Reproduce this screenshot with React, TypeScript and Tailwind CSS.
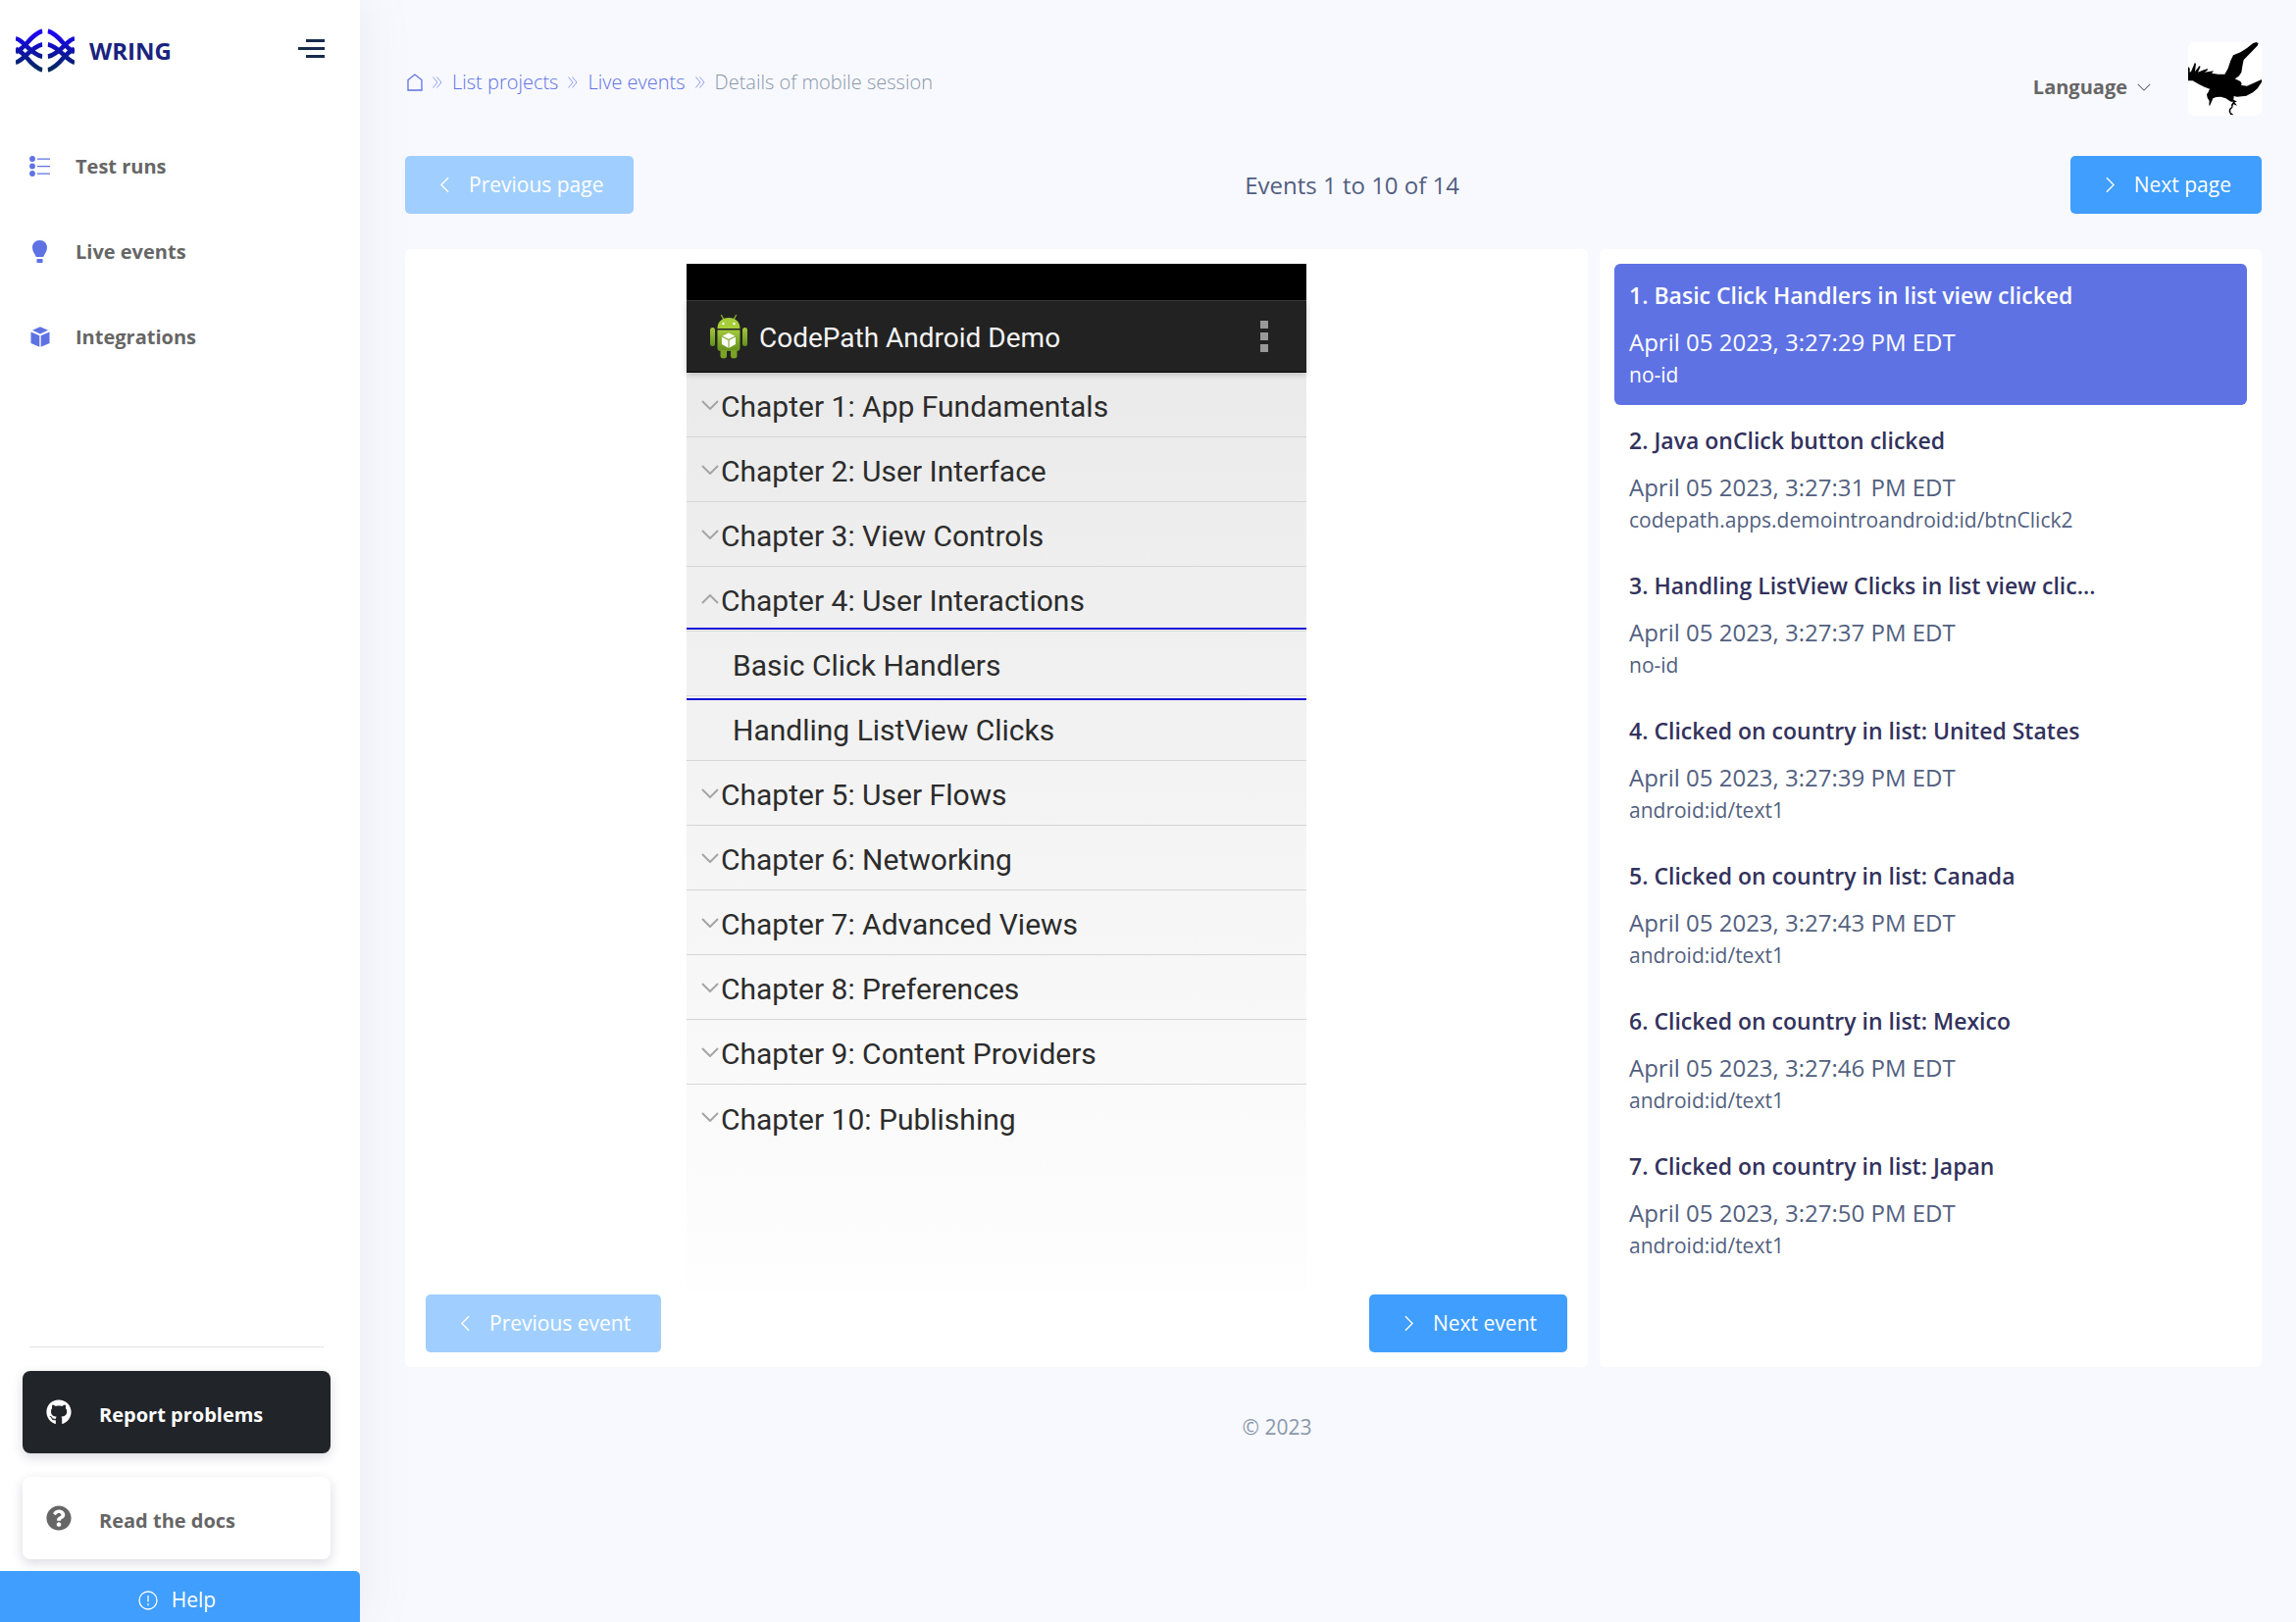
import React from "react";
import { FaGithub, FaQuestionCircle } from "react-icons/fa";

type Dir = "left" | "right" | "down" | "up";

function Chevron({ dir, className, width = 1 }: { dir: Dir; className: string; width?: number }) {
  const d = {
    left: "M9 1 L1 9 L9 17",
    right: "M1 1 L9 9 L1 17",
    down: "M1 1 L9 9 L17 1",
    up: "M1 9 L9 1 L17 9",
  }[dir];
  const vertical = dir === "left" || dir === "right";
  return (
    <svg viewBox={vertical ? "0 0 10 18" : "0 0 18 10"} className={className} fill="none" stroke="currentColor" strokeWidth={width} aria-hidden="true">
      <path d={d} />
    </svg>
  );
}

function Logo() {
  const half = "M82 7C60 15 46 30 34 45C24 57 12 66 0 72M0 30C26 36 42 76 82 86M82 48C42 58 26 98 0 104M82 127C60 119 46 104 34 89C24 77 12 68 0 62";
  return (
    <svg viewBox="0 0 180 134" className="h-[45px] w-[60px]" fill="none" stroke="url(#logoFade)" strokeWidth="14" aria-hidden="true">
      <defs>
        <linearGradient id="logoFade" gradientUnits="userSpaceOnUse" x1="0" y1="0" x2="0" y2="134">
          <stop offset="0" stopColor="#2200ff" />
          <stop offset="0.45" stopColor="#1010b8" />
          <stop offset="1" stopColor="#002b50" />
        </linearGradient>
        <clipPath id="logoHalf">
          <rect width="82" height="134" />
        </clipPath>
      </defs>
      <g clipPath="url(#logoHalf)">
        <path d={half} />
      </g>
      <g transform="translate(180 0) scale(-1 1)">
        <g clipPath="url(#logoHalf)">
          <path d={half} />
        </g>
      </g>
    </svg>
  );
}

function ListIcon() {
  return (
    <svg viewBox="0 0 21 21" className="size-[21px]" fill="currentColor" aria-hidden="true">
      <circle cx="3" cy="3" r="2.9" />
      <circle cx="3" cy="10.5" r="2.9" />
      <circle cx="3" cy="18" r="2.9" />
      <path d="M8 2.4h13v1.3H8zM8 9.9h13v1.3H8zM8 17.4h13v1.3H8z" />
    </svg>
  );
}

function BulbIcon() {
  return (
    <svg viewBox="0 0 15 23" className="h-[23px] w-[15px]" fill="currentColor" aria-hidden="true">
      <path d="M7.5 0C11.8 0 15 3.2 15 7.3c0 3.1-1.3 5-2.6 7.2-.6 1-.6 2.5-1.9 2.5h-6c-1.300 0-1.300-1.500-1.900-2.500C1.300 12.300 0 10.400 0 7.300 0 3.200 3.200 0 7.500 0z" />
      <path d="M4.500 19h6v4h-6z" />
    </svg>
  );
}

function BoxIcon() {
  return (
    <svg viewBox="0 0 20 21" className="h-[21px] w-5" fill="currentColor" aria-hidden="true">
      <path d="M10 .3 18 3.800 10 7.400 2 3.800z" />
      <path d="M.5 5.500 9.300 9.300V20.700L.5 17z" />
      <path d="M19.500 5.500 10.700 9.300V20.700L19.500 17z" />
    </svg>
  );
}

function Bird() {
  return (
    <svg viewBox="0 0 225 225" className="size-full" fill="#000" aria-hidden="true">
      <path d="M0 75 5 80 5 92 9 90 20 64 24 65 21 90 34 73 38 74 30 92 44 86 60 81 59 86 50 92 78 88 72 95 92 98 112 98 122 80 130 56 138 40 160 31 180 18 198 4 208 0 215 2 213 10 190 34 170 54 167 68 163 92 155 104 143 112 160 120 164 127 162 132 180 134 205 123 225 114 225 122 212 142 198 154 178 164 150 167 140 165 139 176 150 182 142 184 150 194 138 190 136 200 130 206 130 215 137 220 137 223 129 221 125 212 126 204 133 198 132 191 138 182 131 182 115 172 100 167 86 168 76 172 71 184 66 195 64 192 65 180 59 170 57 160 62 152 66 143 50 137 32 128 14 118 0 118z" />
    </svg>
  );
}

function Android() {
  return (
    <svg viewBox="0 0 38 46" className="h-[46px] w-[38px]" aria-hidden="true">
      <defs>
        <linearGradient id="droid" x1="0" y1="0" x2="0" y2="1">
          <stop offset="0" stopColor="#a3c93a" />
          <stop offset="1" stopColor="#64901c" />
        </linearGradient>
      </defs>
      <path d="M11.500 1.500 14 6M26.500 1.500 24 6" stroke="#8db32c" strokeWidth="1.300" strokeLinecap="round" />
      <path d="M7.500 15C7.500 8 12 4 19 4s11.500 4 11.500 11z" fill="#a6cd3a" />
      <circle cx="13.500" cy="10" r="1.200" fill="#fff" />
      <circle cx="24.500" cy="10" r="1.200" fill="#fff" />
      <path d="M7.500 16.500h23V35q0 3-3 3h-17q-3 0-3-3z" fill="url(#droid)" />
      <rect x="0" y="14" width="5" height="19" rx="2.500" fill="url(#droid)" />
      <rect x="33" y="14" width="5" height="19" rx="2.500" fill="url(#droid)" />
      <path d="M10.500 37h6.500v6q0 2.500-3.200 2.500t-3.300-2.500zM21 37h6.500v6q0 2.500-3.200 2.500T21 43z" fill="#7ba228" />
      <path d="M19 19.500 26 23v8l-7 4-7-4v-8z" fill="#fff" />
      <path d="m12 23 7 3.500 7-3.500M19 26.500V35" fill="none" stroke="#86ab3a" strokeWidth="1.200" />
    </svg>
  );
}

const nav = [
  { label: "Test runs", icon: <ListIcon /> },
  { label: "Live events", icon: <BulbIcon /> },
  { label: "Integrations", icon: <BoxIcon /> },
];

const chapters: { label: string; kind: "closed" | "open" | "child" }[] = [
  { label: "Chapter 1: App Fundamentals", kind: "closed" },
  { label: "Chapter 2: User Interface", kind: "closed" },
  { label: "Chapter 3: View Controls", kind: "closed" },
  { label: "Chapter 4: User Interactions", kind: "open" },
  { label: "Basic Click Handlers", kind: "child" },
  { label: "Handling ListView Clicks", kind: "child" },
  { label: "Chapter 5: User Flows", kind: "closed" },
  { label: "Chapter 6: Networking", kind: "closed" },
  { label: "Chapter 7: Advanced Views", kind: "closed" },
  { label: "Chapter 8: Preferences", kind: "closed" },
  { label: "Chapter 9: Content Providers", kind: "closed" },
  { label: "Chapter 10: Publishing", kind: "closed" },
];

const events = [
  { title: "1. Basic Click Handlers in list view clicked", time: "3:27:29", id: "no-id" },
  { title: "2. Java onClick button clicked", time: "3:27:31", id: "codepath.apps.demointroandroid:id/btnClick2" },
  { title: "3. Handling ListView Clicks in list view clic...", time: "3:27:37", id: "no-id" },
  { title: "4. Clicked on country in list: United States", time: "3:27:39", id: "android:id/text1" },
  { title: "5. Clicked on country in list: Canada", time: "3:27:43", id: "android:id/text1" },
  { title: "6. Clicked on country in list: Mexico", time: "3:27:46", id: "android:id/text1" },
  { title: "7. Clicked on country in list: Japan", time: "3:27:50", id: "android:id/text1" },
];

function PagerButton({ dir, label, disabled }: { dir: "left" | "right"; label: string; disabled?: boolean }) {
  return (
    <button
      type="button"
      disabled={disabled}
      className="flex h-[59px] items-center gap-5 rounded-[5px] bg-[#409eff] pr-[31px] pl-9 text-[21px] text-white disabled:bg-[#a0cfff]"
    >
      <Chevron dir={dir} className="h-[17px] w-[9px]" width={1.5} />
      {label}
    </button>
  );
}

function Sidebar() {
  return (
    <aside className="sticky top-0 z-10 flex h-screen w-[367px] shrink-0 flex-col bg-white shadow-[0_0_48px_0_rgba(136,152,170,0.15)]">
      <div className="flex items-start justify-between pt-[29px] pr-9 pl-4">
        <a href="#home" className="flex items-center gap-[15px] text-2xl font-bold text-[#1a237e]">
          <Logo />
          WRING
        </a>
        <button type="button" aria-label="Toggle menu" className="flex flex-col items-end gap-[5px] pt-[11px] text-[#172b4d]">
          <span className="h-[3px] w-[19px] bg-current" />
          <span className="h-[3px] w-[27px] bg-current" />
          <span className="h-[3px] w-[19px] bg-current" />
        </button>
      </div>
      <nav className="mt-[52px] flex flex-col">
        {nav.map((item) => (
          <a key={item.label} href="#nav" className="flex h-[87px] items-center pl-[30px] text-xl font-bold text-[#666]">
            <span className="flex w-[47px] text-[#5e72e4]">
              <span className="flex w-[21px] justify-center">{item.icon}</span>
            </span>
            {item.label}
          </a>
        ))}
      </nav>
      <hr className="mt-auto mr-[37px] ml-[30px] border-[#e3e3e3]" />
      <div className="flex flex-col gap-6 pt-6 pr-[30px] pb-3 pl-[23px] text-xl font-bold">
        <a href="#report" className="flex h-[84px] items-center gap-7 rounded-lg bg-[#212529] pt-1.5 pl-6 text-white shadow-[0_4px_12px_rgba(50,50,93,0.18)]">
          <FaGithub className="mb-1.5 size-[26px]" />
          Report problems
        </a>
        <a href="#docs" className="flex h-[84px] items-center gap-7 rounded-lg bg-white pt-1.5 pl-6 text-[#666] shadow-[0_4px_12px_rgba(50,50,93,0.18)]">
          <FaQuestionCircle className="mb-1.5 size-[26px]" />
          Read the docs
        </a>
      </div>
      <button type="button" className="flex h-[52px] shrink-0 items-center justify-center gap-[14px] rounded-tr-[5px] bg-[#409eff] pt-2 pr-1.5 text-[21px] text-white">
        <svg viewBox="0 0 20 20" className="size-5" fill="none" stroke="currentColor" strokeWidth="1.300" aria-hidden="true">
          <circle cx="10" cy="10" r="9" />
          <path d="M10 5v6.500M10 13.200v2" />
        </svg>
        Help
      </button>
    </aside>
  );
}

function Separator() {
  return (
    <svg viewBox="0 0 10 12" className="h-3 w-2.5 text-[#5e72e4]/70" fill="none" stroke="currentColor" aria-hidden="true">
      <path d="M.5.5 5 6 .5 11.500M4.500.5 9 6 4.500 11.500" />
    </svg>
  );
}

function Phone() {
  return (
    <div className="mx-auto flex h-[1050px] w-[632px] flex-col bg-linear-to-b from-[#e8e8e8] to-[#fefefe] font-[Roboto,sans-serif]">
      <div className="h-[37px] shrink-0 bg-black" />
      <div className="z-[1] flex h-[74px] shrink-0 items-center border-t border-b border-t-[#383838] border-b-black bg-[#222] pr-[39px] pl-6 text-[28px] text-[#f3f3f3] shadow-[0_2px_6px_rgba(0,0,0,0.2)]">
        <Android />
        <span className="ml-3 flex-1 pt-1">CodePath Android Demo</span>
        <button type="button" aria-label="More options" className="flex flex-col gap-1">
          <span className="size-2 bg-[#999]" />
          <span className="size-2 bg-[#999]" />
          <span className="size-2 bg-[#999]" />
        </button>
      </div>
      <div className="relative">
        <ul className="text-[30px] text-[#2c2c2c]">
          {chapters.map((c) => (
            <li key={c.label} className="flex h-[66px] items-center border-b border-[#d6d6d6] pt-1 pl-[15px] last:border-b-0">
              {c.kind === "child" ? (
                <span className="w-8" />
              ) : (
                <Chevron dir={c.kind === "open" ? "up" : "down"} className="mr-0.5 mb-1 h-2.5 w-[18px] text-[#a5a5a5]" width={2} />
              )}
              {c.label}
            </li>
          ))}
        </ul>
        <div className="absolute inset-x-0 top-[260px] h-[74px] border-y-2 border-[#1414d8]" />
      </div>
    </div>
  );
}

export default function App() {
  return (
    <div className="flex min-h-screen bg-[#f8f9fe] font-['Open_Sans',sans-serif]">
      <Sidebar />
      <main className="min-w-0 flex-1 pr-[35px] pl-[46px]">
        <header className="flex items-start justify-between pt-[43px]">
          <nav aria-label="Breadcrumb" className="flex h-[82px] items-center gap-[10px] text-xl font-light text-[#5e72e4]">
            <a href="#home" aria-label="Home" className="pl-0.5">
              <svg viewBox="0 0 16 18" className="h-[18px] w-4" fill="none" stroke="currentColor" strokeWidth="1.300" aria-hidden="true">
                <path d="M1 6.500 8 1l7 5.500V17H1z" />
              </svg>
            </a>
            <Separator />
            <a href="#projects">List projects</a>
            <Separator />
            <a href="#events">Live events</a>
            <Separator />
            <span className="text-[#8898aa]">Details of mobile session</span>
          </nav>
          <div className="flex items-center gap-[38px]">
            <button type="button" className="flex items-center gap-[10px] pt-4 text-xl font-bold text-[#666]">
              Language
              <Chevron dir="down" className="h-2 w-[14px]" width={1.3} />
            </button>
            <button type="button" aria-label="Account" className="size-[75px] overflow-hidden rounded-md bg-white">
              <Bird />
            </button>
          </div>
        </header>

        <div className="mt-[34px] flex items-center justify-between">
          <PagerButton dir="left" label="Previous page" disabled />
          <p className="text-2xl text-[#525f7f]">Events 1 to 10 of 14</p>
          <PagerButton dir="right" label="Next page" />
        </div>

        <div className="mt-9 flex gap-3">
          <section className="min-w-0 flex-1 rounded-md bg-white py-[15px]">
            <Phone />
            <div className="flex justify-between px-[21px] pt-px">
              <PagerButton dir="left" label="Previous event" disabled />
              <PagerButton dir="right" label="Next event" />
            </div>
          </section>
          <section className="w-[675px] shrink-0 rounded-md bg-white p-[15px]">
            <ul className="flex flex-col gap-1">
              {events.map((e, i) => (
                <li key={e.title}>
                  <button
                    type="button"
                    className={
                      i === 0
                        ? "flex h-[144px] w-full flex-col items-start rounded-md bg-[#5e72e4] px-[15px] pt-[14px] text-left text-white"
                        : "flex h-[144px] w-full flex-col items-start rounded-md px-[15px] pt-[14px] text-left text-[#525f7f]"
                    }
                  >
                    <span className={i === 0 ? "text-[23px] leading-9 font-semibold" : "text-[23px] leading-9 font-semibold text-[#32325d]"}>{e.title}</span>
                    <span className="mt-3 text-2xl leading-9">April 05 2023, {e.time} PM EDT</span>
                    <span className="text-[21px] leading-[30px]">{e.id}</span>
                  </button>
                </li>
              ))}
            </ul>
          </section>
        </div>
        <footer className="mt-[46px] pr-[115px] text-center text-[21px] text-[#8898aa]">© 2023</footer>
      </main>
    </div>
  );
}
